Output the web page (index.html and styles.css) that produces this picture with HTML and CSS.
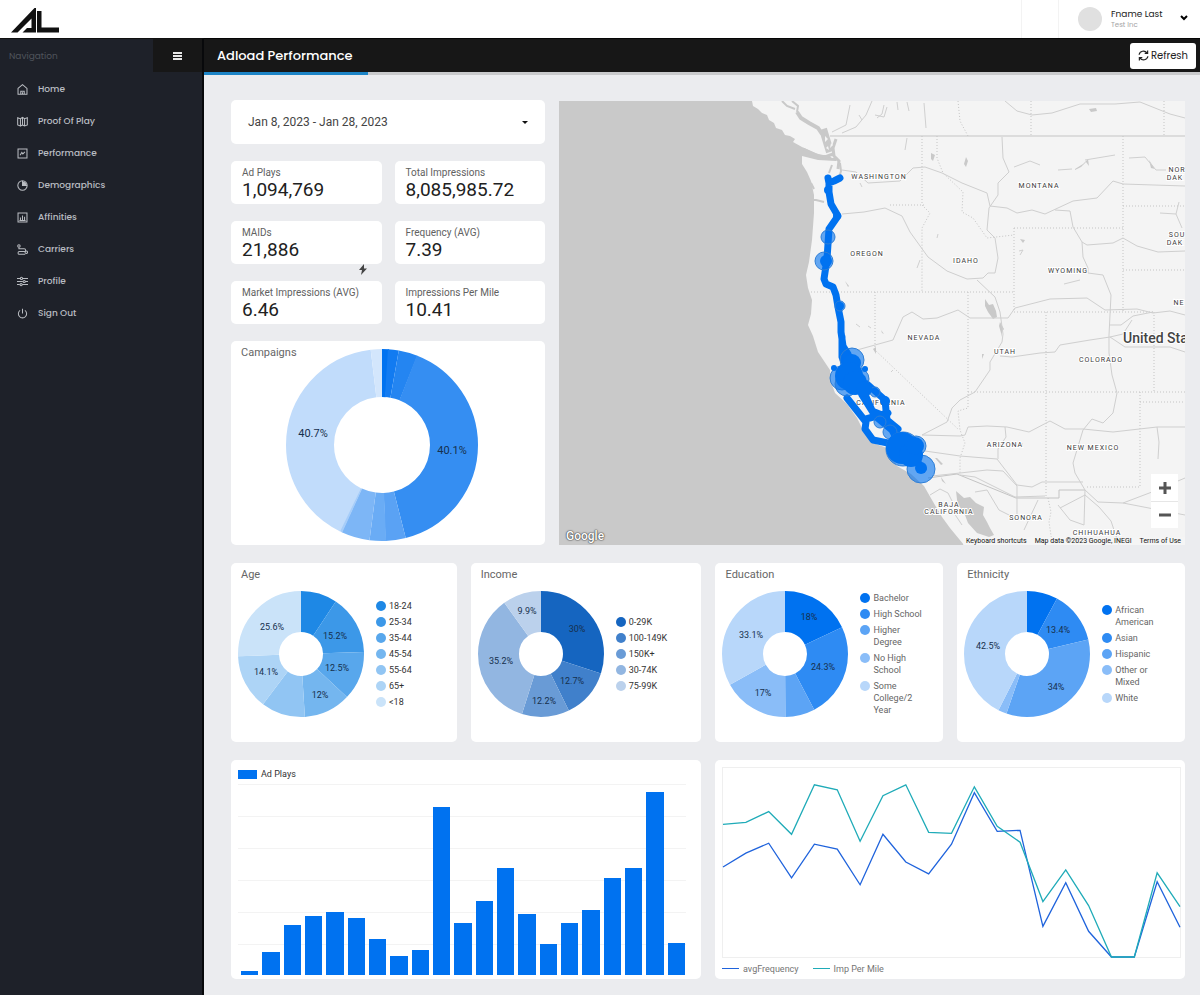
FILE: index.html
```html
<!DOCTYPE html>
<html lang="en">
<head>
    <meta charset="UTF-8">
    <meta name="viewport" content="width=device-width, initial-scale=1.0">
    <title>Adload Performance</title>
    <link rel="stylesheet" href="styles.css">
</head>
<body>

    <header class="topbar">
        <a class="logo" href="#" aria-label="Adload">
            <svg viewBox="0 0 48 25" width="48" height="25">
                <path d="M0 24.500 23.500 0H25V24.500H11.500L16 20H20.500V10.500L6.500 24.500Z"/>
                <path d="M26 3H30.500V19.500H48V24.500H26Z"/>
            </svg>
        </a>
        <div class="topbar-cell"></div>
        <button type="button" class="user-menu">
            <span class="avatar"></span>
            <span class="user-text">
                <span class="user-name">Fname Last</span>
                <span class="user-company">Test Inc</span>
            </span>
            <svg class="chevron" viewBox="0 0 8 6" width="8" height="6"><path d="M1 1l3 3 3-3"/></svg>
        </button>
    </header>

    <div class="layout">
        <!-- Sidebar -->
        <aside class="sidebar">
            <div class="sidebar-head">
                <span class="sidebar-title">Navigation</span>
                <button type="button" class="menu-toggle" aria-label="Toggle navigation">
                    <svg viewBox="0 0 9 8" width="9" height="8"><path d="M0 1h9M0 4h9M0 7h9"/></svg>
                </button>
            </div>
            <nav class="nav">
                <a href="#"><svg viewBox="0 0 16 16"><path d="M1.500 6.500 8 1l6.500 5.500V15h-13zM5.500 15v-4.500h5V15M8 12v3"/></svg>Home</a>
                <a href="#"><svg viewBox="0 0 16 16"><path d="M1 2.500l4 1.500V14.500L1 13zM5 4l3-2 3 2 4-1.500V13l-4 1.500-3-1.500-3 1.500M8 2v11M11 4v10.500"/></svg>Proof Of Play</a>
                <a href="#"><svg viewBox="0 0 16 16"><path d="M1.500 1.500h13v13h-13zM4.500 10.500l2.500-4 1.500 2 3-3"/></svg>Performance</a>
                <a href="#"><svg viewBox="0 0 16 16"><circle cx="8" cy="8" r="6.800"/><path d="M8 1.500V8h6.500"/><path class="solid" d="M8 2v6h6A6 6 0 0 0 8 2z"/></svg>Demographics</a>
                <a href="#"><svg viewBox="0 0 16 16"><path d="M1.500 1.500h13v13h-13zM5 12V8M8 12V5M11 12V7M3.500 12.500h9"/></svg>Affinities</a>
                <a href="#"><svg viewBox="0 0 16 16"><circle cx="2.800" cy="2.800" r="1.800"/><circle cx="13.500" cy="12" r="1.800"/><path d="M2.800 5v2h7.700a2 2 0 0 1 0 4H3.500a2 2 0 0 0 0 4H12"/></svg>Carriers</a>
                <a href="#"><svg viewBox="0 0 16 16"><path d="M0 3.500h5M8 3.500h8M0 8h8.500M12 8h4M0 12.500h4M7.500 12.500H16"/><circle cx="6.500" cy="3.500" r="1.600"/><circle cx="10.500" cy="8" r="1.600"/><circle cx="6" cy="12.500" r="1.600"/></svg>Profile</a>
                <a href="#"><svg viewBox="0 0 16 16"><path d="M8 1v7M4.500 3.500a6 6 0 1 0 7 0"/></svg>Sign Out</a>
            </nav>
        </aside>

        <main class="main">
            <div class="page-head">
                <h1>Adload Performance</h1>
                <button type="button" class="refresh">
                    <svg viewBox="0 0 12 12" width="11" height="11"><path d="M1.200 5.200A4.800 4.800 0 0 1 9.800 3.200M10.800 6.800A4.800 4.800 0 0 1 2.200 8.800M10.500 .5v3.200H7.300M1.500 11.500V8.300h3.200"/></svg>
                    Refresh
                </button>
            </div>
            <div class="progress"><div class="progress-value"></div></div>

            <div class="report">
                <!-- Summary and map -->
                <section class="row row-top">
                    <div class="summary">
                        <button type="button" class="card date-range">Jan 8, 2023 - Jan 28, 2023<span class="caret"></span></button>
                        <div class="metrics">
                            <div class="card metric"><span class="metric-label">Ad Plays</span><span class="metric-value">1,094,769</span></div>
                            <div class="card metric"><span class="metric-label">Total Impressions</span><span class="metric-value">8,085,985.72</span></div>
                            <div class="card metric">
                                <span class="metric-label">MAIDs</span><span class="metric-value">21,886</span>
                                <svg class="bolt" viewBox="0 0 8 11" width="8" height="11"><path d="M5 0 0 6h3L2 11l6-6.500H5z"/></svg>
                            </div>
                            <div class="card metric"><span class="metric-label">Frequency (AVG)</span><span class="metric-value">7.39</span></div>
                            <div class="card metric"><span class="metric-label">Market Impressions (AVG)</span><span class="metric-value">6.46</span></div>
                            <div class="card metric"><span class="metric-label">Impressions Per Mile</span><span class="metric-value">10.41</span></div>
                        </div>
                        <div class="card campaigns">
                            <h2>Campaigns</h2>
                            <svg class="donut donut-large" viewBox="0 0 192 192">
                                <g class="slices">
                                    <circle cx="96" cy="96" r="72" pathLength="100" stroke="#0072f0" stroke-dasharray="1.2 100"/>
                                    <circle cx="96" cy="96" r="72" pathLength="100" stroke="#127bf1" stroke-dasharray="1.8 100" stroke-dashoffset="-1"/>
                                    <circle cx="96" cy="96" r="72" pathLength="100" stroke="#2485f1" stroke-dasharray="3.2 100" stroke-dashoffset="-2.8"/>
                                    <circle cx="96" cy="96" r="72" pathLength="100" stroke="#358ef2" stroke-dasharray="40.1 100" stroke-dashoffset="-5.9"/>
                                    <circle cx="96" cy="96" r="72" pathLength="100" stroke="#5aa2f4" stroke-dasharray="3.4 100" stroke-dashoffset="-46"/>
                                    <circle cx="96" cy="96" r="72" pathLength="100" stroke="#6aacf5" stroke-dasharray="2.8 100" stroke-dashoffset="-49.3"/>
                                    <circle cx="96" cy="96" r="72" pathLength="100" stroke="#7db6f6" stroke-dasharray="4.8 100" stroke-dashoffset="-52.1"/>
                                    <circle cx="96" cy="96" r="72" pathLength="100" stroke="#a6cdf9" stroke-dasharray=".6 100" stroke-dashoffset="-56.8"/>
                                    <circle cx="96" cy="96" r="72" pathLength="100" stroke="#c1dcfb" stroke-dasharray="40.9 100" stroke-dashoffset="-57.2"/>
                                    <circle cx="96" cy="96" r="72" pathLength="100" stroke="#d3e6fc" stroke-dasharray="1.9 100" stroke-dashoffset="-98.1"/>
                                </g>
                                <text x="27" y="84">40.7%</text>
                                <text x="166" y="101">40.1%</text>
                            </svg>
                        </div>
                    </div>

                    <div class="map">
                        <svg class="map-canvas" viewBox="559 101 626 444" preserveAspectRatio="xMinYMin slice">
                            <!-- Land -->
                            <path class="land" d="M752 101L753 106 758 109 762 113 767 115 769 120 774 123 776 128 782 130 785 135 790 136 795 139 793 142 802 147 811 151 820 155 828 155 832 158 838 158 836 161 818 160 802 156 802 164 807 172 811 181 814 195 814 213 812 240 809 262 806 275 808 288 812 300 811 314 808 325 813 336 818 352 830 370 831 382 835 393 847 404 857 418 865 434 873 443 887 448 897 466 911 474 924 486 932 500 942 517 950 528 964 545H1186V101Z"/>
                            <path class="water" d="M956 491L964 498 970 497 976 503 984 507 983 515 987 522 990 528 994 535 989 537 977 533 968 523 965 515 958 508Z"/>
                            <g class="inlets">
                                <path stroke-width="2" d="M782 101l5 5 8 3M792 101l6 5-1 6"/>
                                <path stroke-width="4" d="M797 112l4 6 8 5 9 5 4 6"/>
                                <path stroke-width="8" d="M823 129l3 10 4 13"/>
                                <path stroke-width="3" d="M803 149l13 6 9 2 8-3M836 139l-3 9 1 8 5 5-1 8"/>
                                <path stroke-width="2" d="M840 163l1 8-2 7M832 165l-3 8M812 200l4 0 8 2M811 183l3 6"/>
                            </g>
                            <path class="land" d="M825 136l3 3-3 3zM831 143l2 2-3 3zM826 148l2-2 1 4z"/>
                            <path class="water" d="M985 299l4 6 4-1 3 7 1 6-4 2-5-7-3-6zM1000 322l4 7-3 4-2-7zM966 157l2 4-2 6-2-3zM1089 109l7-1 1 3-6 1zM1075 169l8-5 5-5 1 7-3-4-5 5-6 3zM1149 160l6 9-4-1zM931 153l4 2-2 6-2-2zM845 281l4 5-1 1zM881 330l3 4-2-1zM937 458l6 6-2 1-6-7zM941 477l5 7-4-3zM1020 239l5 1-2 3zM1001 323l2 5-2 9zM982 354l2 0-2 5zM873 349l3-2v7z"/>
                            <path class="creeks" d="M884 105l-2 9-5 4M907 102l2 9M924 103l2 25M907 138l-2 12M897 102l1 8M1014 167l16-6 10 4M1058 170l14-1M1085 160l30-5M1129 158l16-1 5 6 6 7 10 0M1160 213l16 1 3-12M1176 214l6 14M1019 251l4-1-3 5M862 120l-3-5M1064 284l16-4M860 183l2 4M920 260l-3 8M938 234l-1 4M1022 443v4M856 324l4 3M868 326l3 2M891 372l2-2"/>

                            <!-- Borders -->
                            <path class="border" d="M830 136H1185M928 478l29-4 59 24h43v-8h26"/>
                            <path class="border dotted" d="M1031 101v35M1164 101v35M958 101l2 20 8 15M922 136v69l8 8-8 15v64M890 205h34M811 292h203M937 136v22l6 15 20 19-1 20 11 6 14 20 27-3M1014 228h109M1014 228v84h139M1123 136v176M1123 206h62M1123 270h62M1154 312v80M968 292v116l-10 3 2 19 5 13-5 15v15M875 292v58l84 80M1046 312v186M968 392h217M1140 392v95h-55M1140 402h45M1048 498l3 14-2 10 3 20"/>

                            <!-- Roads -->
                            <g class="roads">
                                <path d="M842 170l14 2 12 11 32-2 13-13 12-1 17 6 20 10 25 10 3 13 17 2 10 5 15-3 13 4 28-13 24-3 16-17 10 3 62 2"/>
                                <path d="M842 214l22-2 21-4 17 8 8 16 18 25 19 14 20 8 16-1 5-5 7 0 3-15-3-20-8-8 2-22 9-13v-12l11-11-6-14-1-21"/>
                                <path d="M1055 210l15 1 3 16 9 15 5 3 26-2 10-5 14 8 21 6 27-1M1082 242l1 15 5 11v5l15 2 8 20-2 40v18l3 22 5 18-4 20-10 10-11-4-9 11-10 33 2 10 10 17 13 12 25 1 29-11 33-14M1123 503l62 12"/>
                                <path d="M857 350l18-5 18-5 10-23 9-5 11 7 14-1 21-8 12 8h38l7-10 35-9 37-1 18 12 32-1 16 4 17-2 15 4"/>
                                <path d="M977 280l18 17 5 15 3 22-1 8-12 20v8l-15 22-15 8-8 8-5 14-25 13M1000 356l12 1 28-4 15-1 5-7 30-5 20-3 15 10 45 0 15 5M1109 325l12 0 12-9 20-4M1110 337l13-3 9-14"/>
                                <path d="M922 435l38 1 5-1 3-8 19-1 20 1 22 5 21-11 15 8 18 0 30 3 44-5h28M1005 427l1 10-8 12v10M1157 427l2 15-1 17"/>
                                <path d="M925 451l35 5 37 3 20 26 15 2 10-5h41M932 476l28-3 27-3 16 1 14 15 0 34M960 475l15 2 40 20 30-1M975 492l12-2 12 20 14 7M1038 500l-14 30M1058 505l12 15 14 5 1-35M1060 508l25-13 14 12 12 14 8 24M930 495l10 -6 8 4 4 8M940 505l14 8 8 12"/>
                                <path d="M1005 101l12 10 15 4 20-2 28-9 35 0 25-2 30 12 15 4M842 133l14-6 10-12 6-14M832 132l14-7 4-20M875 115l9 2 3-10"/>
                            </g>

                            <!-- State names -->
                            <g class="states">
                                <text x="879" y="179">WASHINGTON</text>
                                <text x="1039" y="188">MONTANA</text>
                                <text x="1177" y="172">NOR</text>
                                <text x="1175" y="180">DAK</text>
                                <text x="1177" y="237">SOU</text>
                                <text x="1175" y="245">DAK</text>
                                <text x="867" y="256">OREGON</text>
                                <text x="966" y="263">IDAHO</text>
                                <text x="1068" y="273">WYOMING</text>
                                <text x="1179" y="305">NE</text>
                                <text x="924" y="340">NEVADA</text>
                                <text x="1005" y="354">UTAH</text>
                                <text x="1101" y="362">COLORADO</text>
                                <text x="881" y="405">CALIFORNIA</text>
                                <text x="1005" y="447">ARIZONA</text>
                                <text x="1093" y="450">NEW MEXICO</text>
                                <text x="949" y="507">BAJA</text>
                                <text x="949" y="514">CALIFORNIA</text>
                                <text x="1026" y="520">SONORA</text>
                                <text x="1097" y="535">CHIHUAHUA</text>
                            </g>
                            <text class="country" x="1123" y="343">United Sta</text>

                            <!-- Trips -->
                            <g class="trips">
                                <path d="M828 178l1 5 5-2 6-3M829 182v10l2 12 7 12-9 13-1 15-1 15-3 20 2 5 7 3 3 8 2 12 3 15 0 10 2 14 5 8 4 12M842 337l0 20 7 15M847 398l19 24-1 7 8 11 20 4M863 390l11 25 18 15 8 15M867 384l18 16 2 20 11 9M866 419l22-6M862 395l10 16 10 4M905 445l18 24M915 443l-5 18"/>
                            </g>
                            <g class="clusters">
                                <circle cx="828" cy="237" r="7"/>
                                <circle cx="824" cy="261" r="9"/>
                                <circle cx="840" cy="306" r="5"/>
                                <circle cx="852" cy="360" r="12"/>
                                <circle cx="842" cy="378" r="12"/>
                                <circle cx="847" cy="384" r="12"/>
                                <circle cx="858" cy="379" r="11"/>
                                <circle cx="875" cy="392" r="5"/>
                                <circle cx="880" cy="422" r="6"/>
                                <circle cx="890" cy="432" r="7"/>
                                <circle cx="903" cy="449" r="17"/>
                                <circle cx="916" cy="446" r="10"/>
                                <circle cx="921" cy="469" r="14"/>
                            </g>
                            <g class="hotspots">
                                <circle cx="828" cy="190" r="4"/>
                                <circle cx="837" cy="216" r="4"/>
                                <circle cx="826" cy="261" r="6"/>
                                <circle cx="840" cy="306" r="4"/>
                                <circle cx="834" cy="368" r="3"/>
                                <circle cx="865" cy="369" r="3"/>
                                <circle cx="852" cy="363" r="9"/>
                                <circle cx="849" cy="376" r="14"/>
                                <circle cx="855" cy="383" r="12"/>
                                <circle cx="864" cy="389" r="8"/>
                                <circle cx="885" cy="401" r="5"/>
                                <circle cx="902" cy="448" r="16"/>
                                <circle cx="911" cy="455" r="12"/>
                                <circle cx="915" cy="446" r="9"/>
                                <circle cx="921" cy="468" r="6"/>
                            </g>
                        </svg>
                        <span class="google">Google</span>
                        <div class="zoom-control">
                            <button type="button" aria-label="Zoom in"><svg viewBox="0 0 12 12" width="12" height="12"><path d="M6 0v12M0 6h12"/></svg></button>
                            <button type="button" aria-label="Zoom out"><svg viewBox="0 0 12 12" width="12" height="12"><path d="M0 6h12"/></svg></button>
                        </div>
                        <div class="attribution">
                            <button type="button">Keyboard shortcuts</button>
                            <span>Map data ©2023 Google, INEGI</span>
                            <a href="#">Terms of Use</a>
                        </div>
                    </div>
                </section>

                <!-- Audience -->
                <section class="row row-audience">
                    <div class="card audience">
                        <h2>Age</h2>
                        <div class="audience-body">
                            <svg class="donut" viewBox="0 0 126 126">
                                <g class="slices">
                                    <circle cx="63" cy="63" r="42.500" pathLength="100" stroke="#1e88e5" stroke-dasharray="9.3 100"/>
                                    <circle cx="63" cy="63" r="42.500" pathLength="100" stroke="#3c98e8" stroke-dasharray="15.2 100" stroke-dashoffset="-9.3"/>
                                    <circle cx="63" cy="63" r="42.500" pathLength="100" stroke="#58a7ec" stroke-dasharray="12.5 100" stroke-dashoffset="-24.500"/>
                                    <circle cx="63" cy="63" r="42.500" pathLength="100" stroke="#74b6ef" stroke-dasharray="12 100" stroke-dashoffset="-37"/>
                                    <circle cx="63" cy="63" r="42.500" pathLength="100" stroke="#91c5f3" stroke-dasharray="11.3 100" stroke-dashoffset="-49"/>
                                    <circle cx="63" cy="63" r="42.500" pathLength="100" stroke="#add4f6" stroke-dasharray="14.1 100" stroke-dashoffset="-60.3"/>
                                    <circle cx="63" cy="63" r="42.500" pathLength="100" stroke="#cae3f9" stroke-dasharray="25.6 100" stroke-dashoffset="-74.4"/>
                                </g>
                                <text x="34" y="36">25.6%</text>
                                <text x="97" y="45">15.2%</text>
                                <text x="99" y="77">12.5%</text>
                                <text x="82" y="104">12%</text>
                                <text x="28" y="81">14.1%</text>
                            </svg>
                            <ul class="legend">
                                <li><svg viewBox="0 0 10 10"><circle cx="5" cy="5" r="5" fill="#1e88e5"/></svg>18-24</li>
                                <li><svg viewBox="0 0 10 10"><circle cx="5" cy="5" r="5" fill="#3c98e8"/></svg>25-34</li>
                                <li><svg viewBox="0 0 10 10"><circle cx="5" cy="5" r="5" fill="#58a7ec"/></svg>35-44</li>
                                <li><svg viewBox="0 0 10 10"><circle cx="5" cy="5" r="5" fill="#74b6ef"/></svg>45-54</li>
                                <li><svg viewBox="0 0 10 10"><circle cx="5" cy="5" r="5" fill="#91c5f3"/></svg>55-64</li>
                                <li><svg viewBox="0 0 10 10"><circle cx="5" cy="5" r="5" fill="#add4f6"/></svg>65+</li>
                                <li><svg viewBox="0 0 10 10"><circle cx="5" cy="5" r="5" fill="#cae3f9"/></svg>&lt;18</li>
                            </ul>
                        </div>
                    </div>

                    <div class="card audience">
                        <h2>Income</h2>
                        <div class="audience-body">
                            <svg class="donut" viewBox="0 0 126 126">
                                <g class="slices">
                                    <circle cx="63" cy="63" r="42.500" pathLength="100" stroke="#1565c0" stroke-dasharray="30 100"/>
                                    <circle cx="63" cy="63" r="42.500" pathLength="100" stroke="#4080cb" stroke-dasharray="12.7 100" stroke-dashoffset="-30"/>
                                    <circle cx="63" cy="63" r="42.500" pathLength="100" stroke="#699bd6" stroke-dasharray="12.2 100" stroke-dashoffset="-42.7"/>
                                    <circle cx="63" cy="63" r="42.500" pathLength="100" stroke="#92b6e1" stroke-dasharray="35.2 100" stroke-dashoffset="-54.9"/>
                                    <circle cx="63" cy="63" r="42.500" pathLength="100" stroke="#bbd1ec" stroke-dasharray="9.9 100" stroke-dashoffset="-90.1"/>
                                </g>
                                <text x="99" y="38">30%</text>
                                <text x="94" y="90">12.7%</text>
                                <text x="66" y="110">12.2%</text>
                                <text x="23" y="70">35.2%</text>
                                <text x="49" y="20">9.9%</text>
                            </svg>
                            <ul class="legend">
                                <li><svg viewBox="0 0 10 10"><circle cx="5" cy="5" r="5" fill="#1565c0"/></svg>0-29K</li>
                                <li><svg viewBox="0 0 10 10"><circle cx="5" cy="5" r="5" fill="#4080cb"/></svg>100-149K</li>
                                <li><svg viewBox="0 0 10 10"><circle cx="5" cy="5" r="5" fill="#699bd6"/></svg>150K+</li>
                                <li><svg viewBox="0 0 10 10"><circle cx="5" cy="5" r="5" fill="#92b6e1"/></svg>30-74K</li>
                                <li><svg viewBox="0 0 10 10"><circle cx="5" cy="5" r="5" fill="#bbd1ec"/></svg>75-99K</li>
                            </ul>
                        </div>
                    </div>

                    <div class="card audience">
                        <h2>Education</h2>
                        <div class="audience-body">
                            <svg class="donut" viewBox="0 0 126 126">
                                <g class="slices">
                                    <circle cx="63" cy="63" r="42.500" pathLength="100" stroke="#0072f0" stroke-dasharray="18 100"/>
                                    <circle cx="63" cy="63" r="42.500" pathLength="100" stroke="#2e8bf3" stroke-dasharray="24.3 100" stroke-dashoffset="-18"/>
                                    <circle cx="63" cy="63" r="42.500" pathLength="100" stroke="#5ca4f5" stroke-dasharray="7.6 100" stroke-dashoffset="-42.3"/>
                                    <circle cx="63" cy="63" r="42.500" pathLength="100" stroke="#8abdf8" stroke-dasharray="17 100" stroke-dashoffset="-49.9"/>
                                    <circle cx="63" cy="63" r="42.500" pathLength="100" stroke="#b8d7fa" stroke-dasharray="33.1 100" stroke-dashoffset="-66.9"/>
                                </g>
                                <text x="87" y="26">18%</text>
                                <text x="101" y="76">24.3%</text>
                                <text x="41" y="102">17%</text>
                                <text x="29" y="44">33.1%</text>
                            </svg>
                            <ul class="legend legend-muted">
                                <li><svg viewBox="0 0 10 10"><circle cx="5" cy="5" r="5" fill="#0072f0"/></svg>Bachelor</li>
                                <li><svg viewBox="0 0 10 10"><circle cx="5" cy="5" r="5" fill="#2e8bf3"/></svg>High School</li>
                                <li><svg viewBox="0 0 10 10"><circle cx="5" cy="5" r="5" fill="#5ca4f5"/></svg>Higher<br>Degree</li>
                                <li><svg viewBox="0 0 10 10"><circle cx="5" cy="5" r="5" fill="#8abdf8"/></svg>No High<br>School</li>
                                <li><svg viewBox="0 0 10 10"><circle cx="5" cy="5" r="5" fill="#b8d7fa"/></svg>Some<br>College/2<br>Year</li>
                            </ul>
                        </div>
                    </div>

                    <div class="card audience">
                        <h2>Ethnicity</h2>
                        <div class="audience-body">
                            <svg class="donut" viewBox="0 0 126 126">
                                <g class="slices">
                                    <circle cx="63" cy="63" r="42.500" pathLength="100" stroke="#0072f0" stroke-dasharray="7.9 100"/>
                                    <circle cx="63" cy="63" r="42.500" pathLength="100" stroke="#2e8bf3" stroke-dasharray="13.4 100" stroke-dashoffset="-7.9"/>
                                    <circle cx="63" cy="63" r="42.500" pathLength="100" stroke="#5ca4f5" stroke-dasharray="34 100" stroke-dashoffset="-21.3"/>
                                    <circle cx="63" cy="63" r="42.500" pathLength="100" stroke="#8abdf8" stroke-dasharray="2.2 100" stroke-dashoffset="-55.3"/>
                                    <circle cx="63" cy="63" r="42.500" pathLength="100" stroke="#b8d7fa" stroke-dasharray="42.5 100" stroke-dashoffset="-57.500"/>
                                </g>
                                <text x="94" y="39">13.4%</text>
                                <text x="92" y="96">34%</text>
                                <text x="24" y="55">42.5%</text>
                            </svg>
                            <ul class="legend legend-muted">
                                <li><svg viewBox="0 0 10 10"><circle cx="5" cy="5" r="5" fill="#0072f0"/></svg>African<br>American</li>
                                <li><svg viewBox="0 0 10 10"><circle cx="5" cy="5" r="5" fill="#2e8bf3"/></svg>Asian</li>
                                <li><svg viewBox="0 0 10 10"><circle cx="5" cy="5" r="5" fill="#5ca4f5"/></svg>Hispanic</li>
                                <li><svg viewBox="0 0 10 10"><circle cx="5" cy="5" r="5" fill="#8abdf8"/></svg>Other or<br>Mixed</li>
                                <li><svg viewBox="0 0 10 10"><circle cx="5" cy="5" r="5" fill="#b8d7fa"/></svg>White</li>
                            </ul>
                        </div>
                    </div>
                </section>

                <!-- Trends -->
                <section class="row row-trends">
                    <div class="card bar-card">
                        <div class="bar-legend"><span class="swatch"></span>Ad Plays</div>
                        <div class="bars">
                            <div class="bar" style="height: 2%"></div>
                            <div class="bar" style="height: 12%"></div>
                            <div class="bar" style="height: 26%"></div>
                            <div class="bar" style="height: 31%"></div>
                            <div class="bar" style="height: 33%"></div>
                            <div class="bar" style="height: 30%"></div>
                            <div class="bar" style="height: 19%"></div>
                            <div class="bar" style="height: 10%"></div>
                            <div class="bar" style="height: 13%"></div>
                            <div class="bar" style="height: 88%"></div>
                            <div class="bar" style="height: 27%"></div>
                            <div class="bar" style="height: 39%"></div>
                            <div class="bar" style="height: 56%"></div>
                            <div class="bar" style="height: 32%"></div>
                            <div class="bar" style="height: 16%"></div>
                            <div class="bar" style="height: 27%"></div>
                            <div class="bar" style="height: 34%"></div>
                            <div class="bar" style="height: 51%"></div>
                            <div class="bar" style="height: 56%"></div>
                            <div class="bar" style="height: 96%"></div>
                            <div class="bar" style="height: 17%"></div>
                        </div>
                    </div>

                    <div class="card line-card">
                        <svg class="lines" viewBox="0 0 460 191" preserveAspectRatio="none">
                            <polyline class="line-frequency" points="0,100 23,86 46,76 69,111 92,77 115,82 138,118 161,67 184,95 207,107 230,77 253,25 276,64 299,63 322,160 345,116 368,165 391,191 414,191 437,115 460,161"/>
                            <polyline class="line-impressions" points="0,57 23,55 46,44 69,67 92,17 115,22 138,74 161,28 184,17 207,65 230,66 253,19 276,59 299,75 322,135 345,103 368,139 391,191 414,191 437,106 460,140"/>
                        </svg>
                        <div class="line-legend">
                            <span><i class="key key-frequency"></i>avgFrequency</span>
                            <span><i class="key key-impressions"></i>Imp Per Mile</span>
                        </div>
                    </div>
                </section>
            </div>
        </main>
    </div>

</body>
</html>
```
FILE: styles.css
```css
/* --- General --- */
* { box-sizing: border-box; }
body {
    margin: 0;
    min-height: 100vh;
    display: flex;
    flex-direction: column;
    background: #ebecef;
    color: #212121;
    font-family: Roboto, Arial, sans-serif;
}
button { border: 0; padding: 0; background: none; color: inherit; font: inherit; cursor: pointer; }
a { color: inherit; text-decoration: none; }
h1, h2, ul { margin: 0; padding: 0; }
ul { list-style: none; }

/* --- Top bar --- */
.topbar {
    display: flex;
    height: 38px;
    background: #fff;
    font-family: Poppins, Inter, sans-serif;
}
.logo { padding: 8px 0 0 11px; margin-right: auto; }
.logo svg { display: block; fill: #111; }
.topbar-cell { width: 38px; border-left: 1px solid #f3f3f3; border-right: 1px solid #f3f3f3; }
.user-menu { display: flex; align-items: center; padding: 0 12px 0 19px; text-align: left; }
.avatar { width: 24px; height: 24px; border-radius: 50%; background: #e0e0e0; margin-right: 9px; }
.user-text { width: 69px; }
.user-name { display: block; font-size: 9px; line-height: 11px; color: #222; }
.user-company { display: block; font-size: 7px; line-height: 9px; color: #a5a5a5; }
.chevron { fill: none; stroke: #000; stroke-width: 2; margin-bottom: 3px; }

/* --- Sidebar --- */
.layout { display: flex; flex: 1; }
.sidebar {
    width: 204px;
    flex-shrink: 0;
    background: #1e2129;
    border-right: 2px solid #08090b;
    border-top: 1px solid #111;
    font-family: Poppins, Inter, sans-serif;
}
.sidebar-head { display: flex; align-items: flex-start; justify-content: space-between; height: 34px; }
.sidebar-title { padding-left: 9px; font-size: 9px; line-height: 34px; color: #50545c; }
.menu-toggle { width: 49px; height: 33px; background: #171717; }
.menu-toggle svg { display: block; margin: 0 auto; stroke: #e6e6e6; stroke-width: 2; }
.nav a { display: flex; align-items: center; gap: 10px; height: 32px; padding-left: 17px; font-size: 9px; font-weight: 500; color: #b9bcc1; }
.nav svg { width: 11px; height: 11px; fill: none; stroke: #b9bcc1; stroke-width: 1.5; }
.nav .solid { fill: #b9bcc1; stroke: none; }

/* --- Page head --- */
.main { flex: 1; min-width: 0; }
.page-head {
    display: flex;
    align-items: center;
    justify-content: space-between;
    height: 34px;
    padding: 0 4px 0 13px;
    background: #171717;
    border-top: 1px solid #050505;
    font-family: Poppins, Inter, sans-serif;
}
.page-head h1 { font-size: 13px; font-weight: 500; color: #fff; }
.refresh { display: flex; align-items: center; gap: 2px; height: 26px; padding: 0 8px; border-radius: 3px; background: #fff; font-size: 10px; color: #222; }
.refresh svg { fill: none; stroke: #222; stroke-width: 1.3; }
.progress { height: 3px; background: #c9cacc; }
.progress-value { width: 164px; height: 3px; background: #1c84c6; }

/* --- Report grid --- */
.report { display: flex; flex-direction: column; gap: 18px; padding: 25px 15px 16px 27px; }
.row { display: grid; gap: 14px; }
.row-top { grid-template-columns: 314px 1fr; }
.row-audience { grid-template-columns: 226fr 231fr 228fr 228fr; }
.row-trends { grid-template-columns: 1fr 1fr; }
.card { background: #fff; border-radius: 5px; }
.card h2 { padding-left: 10px; font-size: 11px; font-weight: 400; line-height: 23px; color: #666; }

/* --- Summary --- */
.summary { display: flex; flex-direction: column; gap: 17px; }
.date-range { display: flex; align-items: center; justify-content: space-between; height: 44px; padding: 0 17px; font-size: 12px; color: #444; }
.caret { border: 3px solid transparent; border-top-color: #111; border-bottom: 0; }
.metrics { display: grid; grid-template-columns: 1fr 1fr; gap: 17px 13px; }
.metric { position: relative; display: flex; flex-direction: column; height: 43px; padding: 6px 11px; }
.metric-label { font-size: 10px; line-height: 12px; color: #616161; }
.metric-value { font-size: 19px; line-height: 22px; }
.bolt { position: absolute; right: 15px; bottom: -11px; fill: #444; }
.campaigns { display: grid; height: 204px; padding-right: 12px; padding-bottom: 4px; }
.campaigns > * { grid-area: 1 / 1; }

/* --- Donuts --- */
.donut { width: 126px; height: 126px; flex-shrink: 0; font-size: 9px; fill: #16304d; }
.donut text { text-anchor: middle; dominant-baseline: central; }
.donut-large { width: 192px; height: 192px; justify-self: center; align-self: end; font-size: 11px; }
.slices { fill: none; stroke-width: 41; transform: rotate(-90deg); transform-origin: 50% 50%; }
.donut-large .slices { stroke-width: 48; }

/* --- Audience --- */
.audience { height: 179px; }
.audience-body { display: flex; align-items: center; gap: 12px; height: 136px; padding: 0 7px; }
.legend { display: flex; flex-direction: column; gap: 4px; font-size: 9px; line-height: 12px; color: #333; }
.legend li { display: grid; grid-template-columns: 10px auto; column-gap: 3px; }
.legend svg { width: 10px; height: 10px; margin-top: 1px; }
.legend-muted { color: #666; }

/* --- Map --- */
.map { position: relative; height: 444px; margin-top: 1px; overflow: hidden; background: #c9c9c9; }
.map-canvas { display: block; width: 100%; height: 100%; }
.land { fill: #f4f4f4; }
.water { fill: #c9c9c9; }
.inlets { fill: none; stroke: #c9c9c9; }
.creeks { fill: none; stroke: #d0d0d0; }
.border { fill: none; stroke: #c4c4c4; }
.dotted { stroke-dasharray: 1 2; }
.roads { fill: none; stroke: #cfcfcf; stroke-linejoin: round; }
.states { font-size: 7px; letter-spacing: 1px; text-anchor: middle; fill: #3a3a3a; stroke: #fff; stroke-width: 2; paint-order: stroke; }
.country { font-size: 14px; font-weight: 500; fill: #444; stroke: #fff; stroke-width: 2; paint-order: stroke; }
.trips { fill: none; stroke: #0072f0; stroke-width: 7; stroke-linecap: round; stroke-linejoin: round; }
.clusters { fill: #0072f0; fill-opacity: 0.6; stroke: #2f7fd6; }
.hotspots { fill: #0072f0; }
.google { position: absolute; left: 7px; bottom: 1px; font-size: 12px; font-weight: 500; line-height: 16px; color: #fff; text-shadow: 0 0 1px #444, 0 0 1px #444, 0 0 2px #555; }
.zoom-control { position: absolute; right: 7px; bottom: 17px; width: 27px; background: #fff; }
.zoom-control button { display: flex; align-items: center; justify-content: center; width: 100%; height: 27px; }
.zoom-control button + button { border-top: 1px solid #e6e6e6; }
.zoom-control svg { stroke: #555; stroke-width: 3; }
.attribution { position: absolute; right: 0; bottom: 0; display: flex; gap: 8px; padding: 0 4px 0 3px; background: rgba(245, 245, 245, 0.7); font-size: 7px; line-height: 8px; color: #111; }

/* --- Bar chart --- */
.bar-card { height: 219px; padding: 7px 15px 4px 7px; }
.bar-legend { display: flex; align-items: center; gap: 4px; height: 14px; margin-bottom: 3px; font-size: 9px; color: #333; }
.swatch { width: 19px; height: 9px; background: #0072f0; }
.bars {
    display: flex;
    align-items: flex-end;
    gap: 4px;
    height: 191px;
    padding: 0 1px 0 3px;
    background: repeating-linear-gradient(#f3f3f3 0 1px, transparent 1px 32px);
}
.bar { flex: 1; background: #0072f0; }

/* --- Line chart --- */
.line-card { height: 219px; padding: 7px 4px 4px 7px; }
.lines { display: block; width: 100%; height: 191px; fill: none; border: 1px solid #efefef; overflow: visible; }
.lines polyline { stroke-width: 1.3; vector-effect: non-scaling-stroke; }
.line-frequency { stroke: #1f63dc; }
.line-impressions { stroke: #1fabb8; }
.line-legend { display: flex; gap: 14px; height: 21px; align-items: center; font-size: 9px; color: #757575; }
.line-legend span { display: flex; align-items: center; gap: 4px; }
.key { width: 17px; border-top: 1px solid; }
.key-frequency { border-color: #1f63dc; }
.key-impressions { border-color: #1fabb8; }
```
